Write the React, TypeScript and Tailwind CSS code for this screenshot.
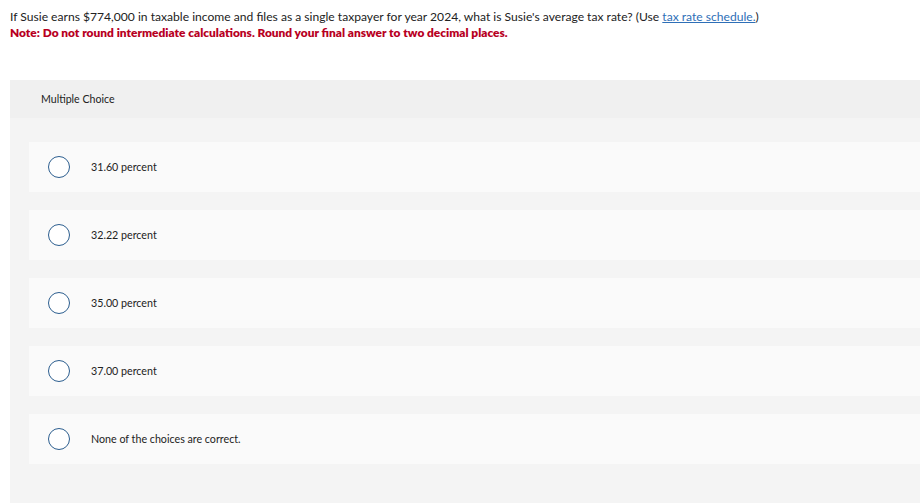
import React from "react";

const options = [
  "31.60 percent",
  "32.22 percent",
  "35.00 percent",
  "37.00 percent",
  "None of the choices are correct.",
];

export default function App() {
  return (
    <div
      className="w-[920px] h-[503px] bg-white overflow-hidden text-[#222]"
      style={{ fontFamily: 'Lato, "Liberation Sans", sans-serif' }}
    >
      <div className="px-[10px] pt-[9px] text-[12.1px] leading-[16px]">
        <p>
          If Susie earns $774,000 in taxable income and files as a single taxpayer for year 2024, what is
          Susie's average tax rate? (Use{" "}
          <span className="text-[#2e6fb7] underline">tax rate schedule.</span>)
        </p>
        <p className="font-extrabold text-[#b8001f] text-[11.9px]">
          Note: Do not round intermediate calculations. Round your final answer to two decimal places.
        </p>
      </div>
      <div className="ml-[10px] mt-[39px] bg-[#f4f4f4] h-[423px]">
        <div className="h-[38px] bg-[#f0f0f0] flex items-center pl-[31px] pt-[1px] text-[10.6px] text-[#222]">
          Multiple Choice
        </div>
        <div className="flex flex-col gap-[18px] pt-[24px] pl-[19px]">
          {options.map((o) => (
            <div key={o} className="h-[50px] bg-[#fafafa] flex items-center">
              <span className="ml-[19px] w-[22px] h-[22px] rounded-full border-[1.5px] border-[#2c5e8f] bg-white" />
              <span className="ml-[21px] text-[10.7px] text-[#222]">{o}</span>
            </div>
          ))}
        </div>
      </div>
    </div>
  );
}
